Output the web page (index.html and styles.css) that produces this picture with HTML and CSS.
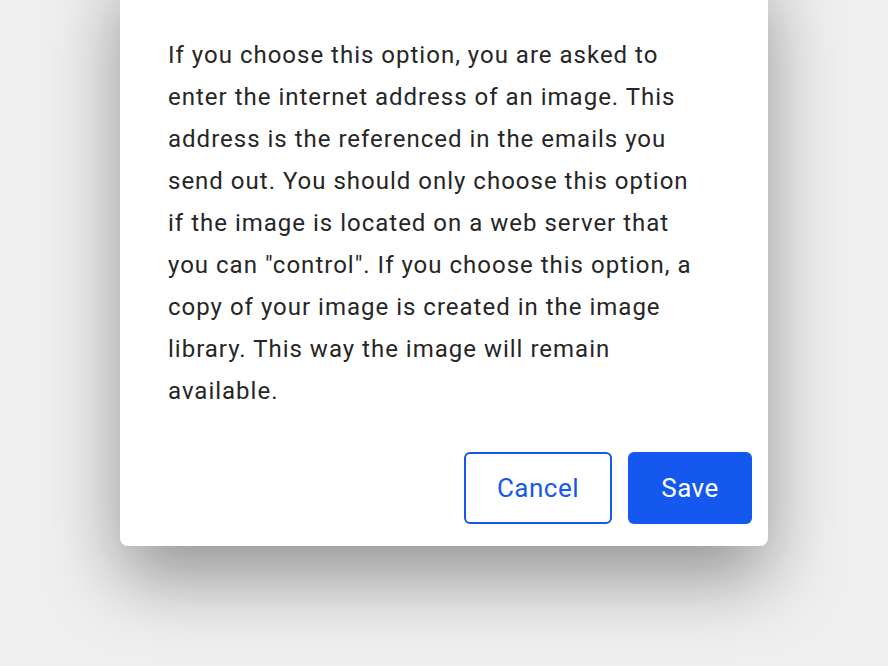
FILE: index.html
```html
<!DOCTYPE html>
<html lang="en">

<head>
    <meta charset="UTF-8">
    <meta name="viewport" content="width=device-width, initial-scale=1.0">
    <title>Image option</title>
    <link rel="stylesheet" href="styles.css">
</head>

<body>
    <div class="dialog">
        <p class="dialog-text">
            If you choose this option, you are asked to enter the internet address of an image. This address is the
            referenced in the emails you send out. You should only choose this option if the image is located on a web
            server that you can "control". If you choose this option, a copy of your image is created in the image
            library. This way the image will remain available.
        </p>
        <div class="dialog-actions">
            <button class="btn btn-outline">Cancel</button>
            <button class="btn btn-primary">Save</button>
        </div>
    </div>
</body>

</html>
```

FILE: styles.css
```css
html,
body {
    margin: 0;
    height: 100%;
    background: #efefef;
    overflow: hidden;
}

body {
    font-family: Roboto, "Liberation Sans", sans-serif;
}

.dialog {
    width: 648px;
    margin: -40px 0 0 120px;
    padding: 74px 16px 22px 48px;
    box-sizing: border-box;
    background: #fff;
    border-radius: 8px;
    box-shadow: 0 32px 72px rgba(0, 0, 0, .38);
}

.dialog-text {
    margin: 0;
    width: 538px;
    font-size: 24px;
    line-height: 42px;
    letter-spacing: 1px;
    color: #262626;
}

.dialog-actions {
    display: flex;
    justify-content: flex-end;
    gap: 16px;
    margin-top: 40px;
}

.btn {
    height: 72px;
    border-radius: 6px;
    font-family: inherit;
    font-size: 26px;
    letter-spacing: .5px;
    box-sizing: border-box;
    cursor: pointer;
}

.btn-outline {
    width: 148px;
    background: #fff;
    border: 2px solid #1558f0;
    color: #1558f0;
}

.btn-primary {
    width: 124px;
    background: #1558f0;
    border: 0;
    color: #fff;
}
```
